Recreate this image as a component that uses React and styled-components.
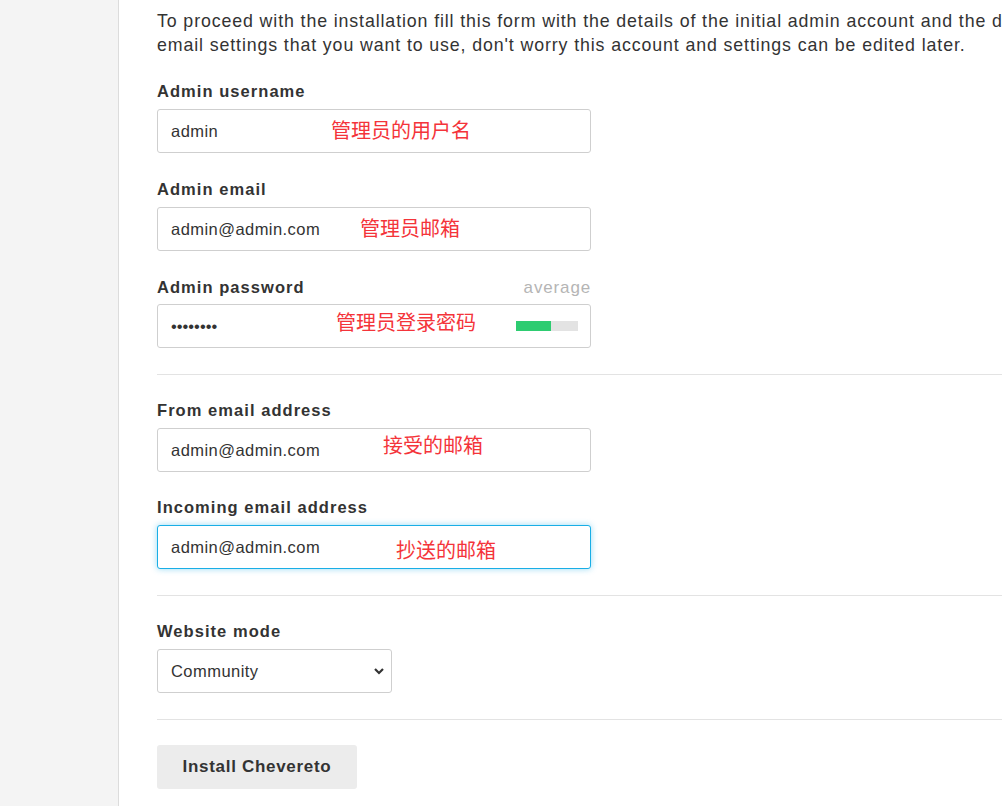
import styled, { createGlobalStyle } from "styled-components";

const GlobalStyle = createGlobalStyle`
    html, body {
        margin: 0;
        padding: 0;
        background: #fff;
        overflow: hidden;
    }
    body {
        font-family: "Liberation Sans", Arial, sans-serif;
        color: #333;
    }
`;

const Page = styled.div`
    display: flex;
    min-height: 806px;
    width: 1002px;
    overflow: hidden;
`;

const Sidebar = styled.div`
    flex: 0 0 118px;
    background: #f4f4f4;
    border-right: 1px solid #dcdcdc;
`;

const Main = styled.div`
    flex: 0 0 1100px;
    padding: 9px 0 0 38px;
    box-sizing: border-box;
`;

const Intro = styled.p`
    margin: 0 0 24px;
    font-size: 17.8px;
    line-height: 24px;
    letter-spacing: 0.88px;
    white-space: nowrap;
    color: #333;
`;

const Field = styled.div`
    margin-bottom: ${(p) => p.$gap || 25}px;
    width: ${(p) => p.$width || "434px"};
`;

const LabelRow = styled.div`
    display: flex;
    justify-content: space-between;
    align-items: baseline;
    height: 20px;
    margin-bottom: ${(p) => p.$gap || 8}px;
`;

const Label = styled.label`
    font-size: 16.5px;
    font-weight: bold;
    line-height: 20px;
    letter-spacing: 1.05px;
    color: #333;
`;

const Hint = styled.span`
    font-size: 17px;
    line-height: 20px;
    letter-spacing: 0.85px;
    color: #b5b5b5;
`;

const InputWrap = styled.div`
    position: relative;
`;

const Input = styled.input`
    display: block;
    width: 100%;
    height: 44px;
    box-sizing: border-box;
    padding: 0 13px;
    font-family: "Liberation Sans", Arial, sans-serif;
    font-size: 16.5px;
    letter-spacing: ${(p) => (p.type === "password" ? "0" : "0.45px")};
    color: #333;
    background: #fff;
    border: 1px solid ${(p) => (p.$focused ? "#19aee6" : "#cfcfcf")};
    border-radius: 3px;
    box-shadow: ${(p) => (p.$focused ? "0 0 6px rgba(25, 174, 230, 0.45)" : "none")};
    outline: none;
`;

const Note = styled.span`
    position: absolute;
    left: ${(p) => p.$left}px;
    top: ${(p) => p.$top}px;
    font-family: "Noto Sans CJK SC", sans-serif;
    font-size: 20px;
    line-height: 24px;
    color: #f4343a;
    pointer-events: none;
    white-space: nowrap;
`;

const Meter = styled.div`
    position: absolute;
    right: 13px;
    top: 17px;
    width: 62px;
    height: 10px;
    background: #e3e3e3;
`;

const MeterFill = styled.div`
    height: 100%;
    background: #2ecc71;
`;

const Divider = styled.hr`
    border: 0;
    border-top: 1px solid #e3e3e3;
    margin: 0 0 25px;
    width: 100%;
`;

const Select = styled.select`
    display: block;
    width: 100%;
    height: 44px;
    box-sizing: border-box;
    padding: 0 13px;
    font-family: "Liberation Sans", Arial, sans-serif;
    font-size: 16.5px;
    letter-spacing: 0.45px;
    color: #333;
    background: #fff;
    border: 1px solid #cfcfcf;
    border-radius: 3px;
    appearance: none;
    outline: none;
`;

const Chevron = styled.svg`
    position: absolute;
    right: 7px;
    top: 17px;
    width: 12px;
    height: 10px;
    pointer-events: none;
`;

const Button = styled.button`
    height: 44px;
    width: 200px;
    border: 0;
    border-radius: 3px;
    background: #ececec;
    font-family: "Liberation Sans", Arial, sans-serif;
    font-size: 17px;
    font-weight: bold;
    letter-spacing: 0.7px;
    color: #333;
`;

export default function App() {
    return (
        <>
            <GlobalStyle />
            <Page>
                <Sidebar />
                <Main>
                    <Intro>
                        To proceed with the installation fill this form with the details of the initial admin account and the default
                        <br />
                        email settings that you want to use, don't worry this account and settings can be edited later.
                    </Intro>

                    <Field $gap={26}>
                        <LabelRow>
                            <Label>Admin username</Label>
                        </LabelRow>
                        <InputWrap>
                            <Input defaultValue="admin" />
                            <Note $left={174} $top={9}>管理员的用户名</Note>
                        </InputWrap>
                    </Field>

                    <Field $gap={26}>
                        <LabelRow>
                            <Label>Admin email</Label>
                        </LabelRow>
                        <InputWrap>
                            <Input defaultValue="admin@admin.com" />
                            <Note $left={203} $top={9}>管理员邮箱</Note>
                        </InputWrap>
                    </Field>

                    <Field $gap={26}>
                        <LabelRow $gap={7}>
                            <Label>Admin password</Label>
                            <Hint>average</Hint>
                        </LabelRow>
                        <InputWrap>
                            <Input type="password" defaultValue="password" />
                            <Note $left={179} $top={6}>管理员登录密码</Note>
                            <Meter>
                                <MeterFill style={{ width: "56%" }} />
                            </Meter>
                        </InputWrap>
                    </Field>

                    <Divider />

                    <Field>
                        <LabelRow>
                            <Label>From email address</Label>
                        </LabelRow>
                        <InputWrap>
                            <Input defaultValue="admin@admin.com" />
                            <Note $left={226} $top={5}>接受的邮箱</Note>
                        </InputWrap>
                    </Field>

                    <Field $gap={26}>
                        <LabelRow>
                            <Label>Incoming email address</Label>
                        </LabelRow>
                        <InputWrap>
                            <Input $focused defaultValue="admin@admin.com" />
                            <Note $left={239} $top={13}>抄送的邮箱</Note>
                        </InputWrap>
                    </Field>

                    <Divider />

                    <Field $width="235px" $gap={26}>
                        <LabelRow>
                            <Label>Website mode</Label>
                        </LabelRow>
                        <InputWrap>
                            <Select defaultValue="community">
                                <option value="community">Community</option>
                                <option value="personal">Personal</option>
                            </Select>
                            <Chevron viewBox="0 0 12 10">
                                <path d="M2 3 L6 7 L10 3" fill="none" stroke="#333" strokeWidth="2.2" />
                            </Chevron>
                        </InputWrap>
                    </Field>

                    <Divider />

                    <Button>Install Chevereto</Button>
                </Main>
            </Page>
        </>
    );
}
